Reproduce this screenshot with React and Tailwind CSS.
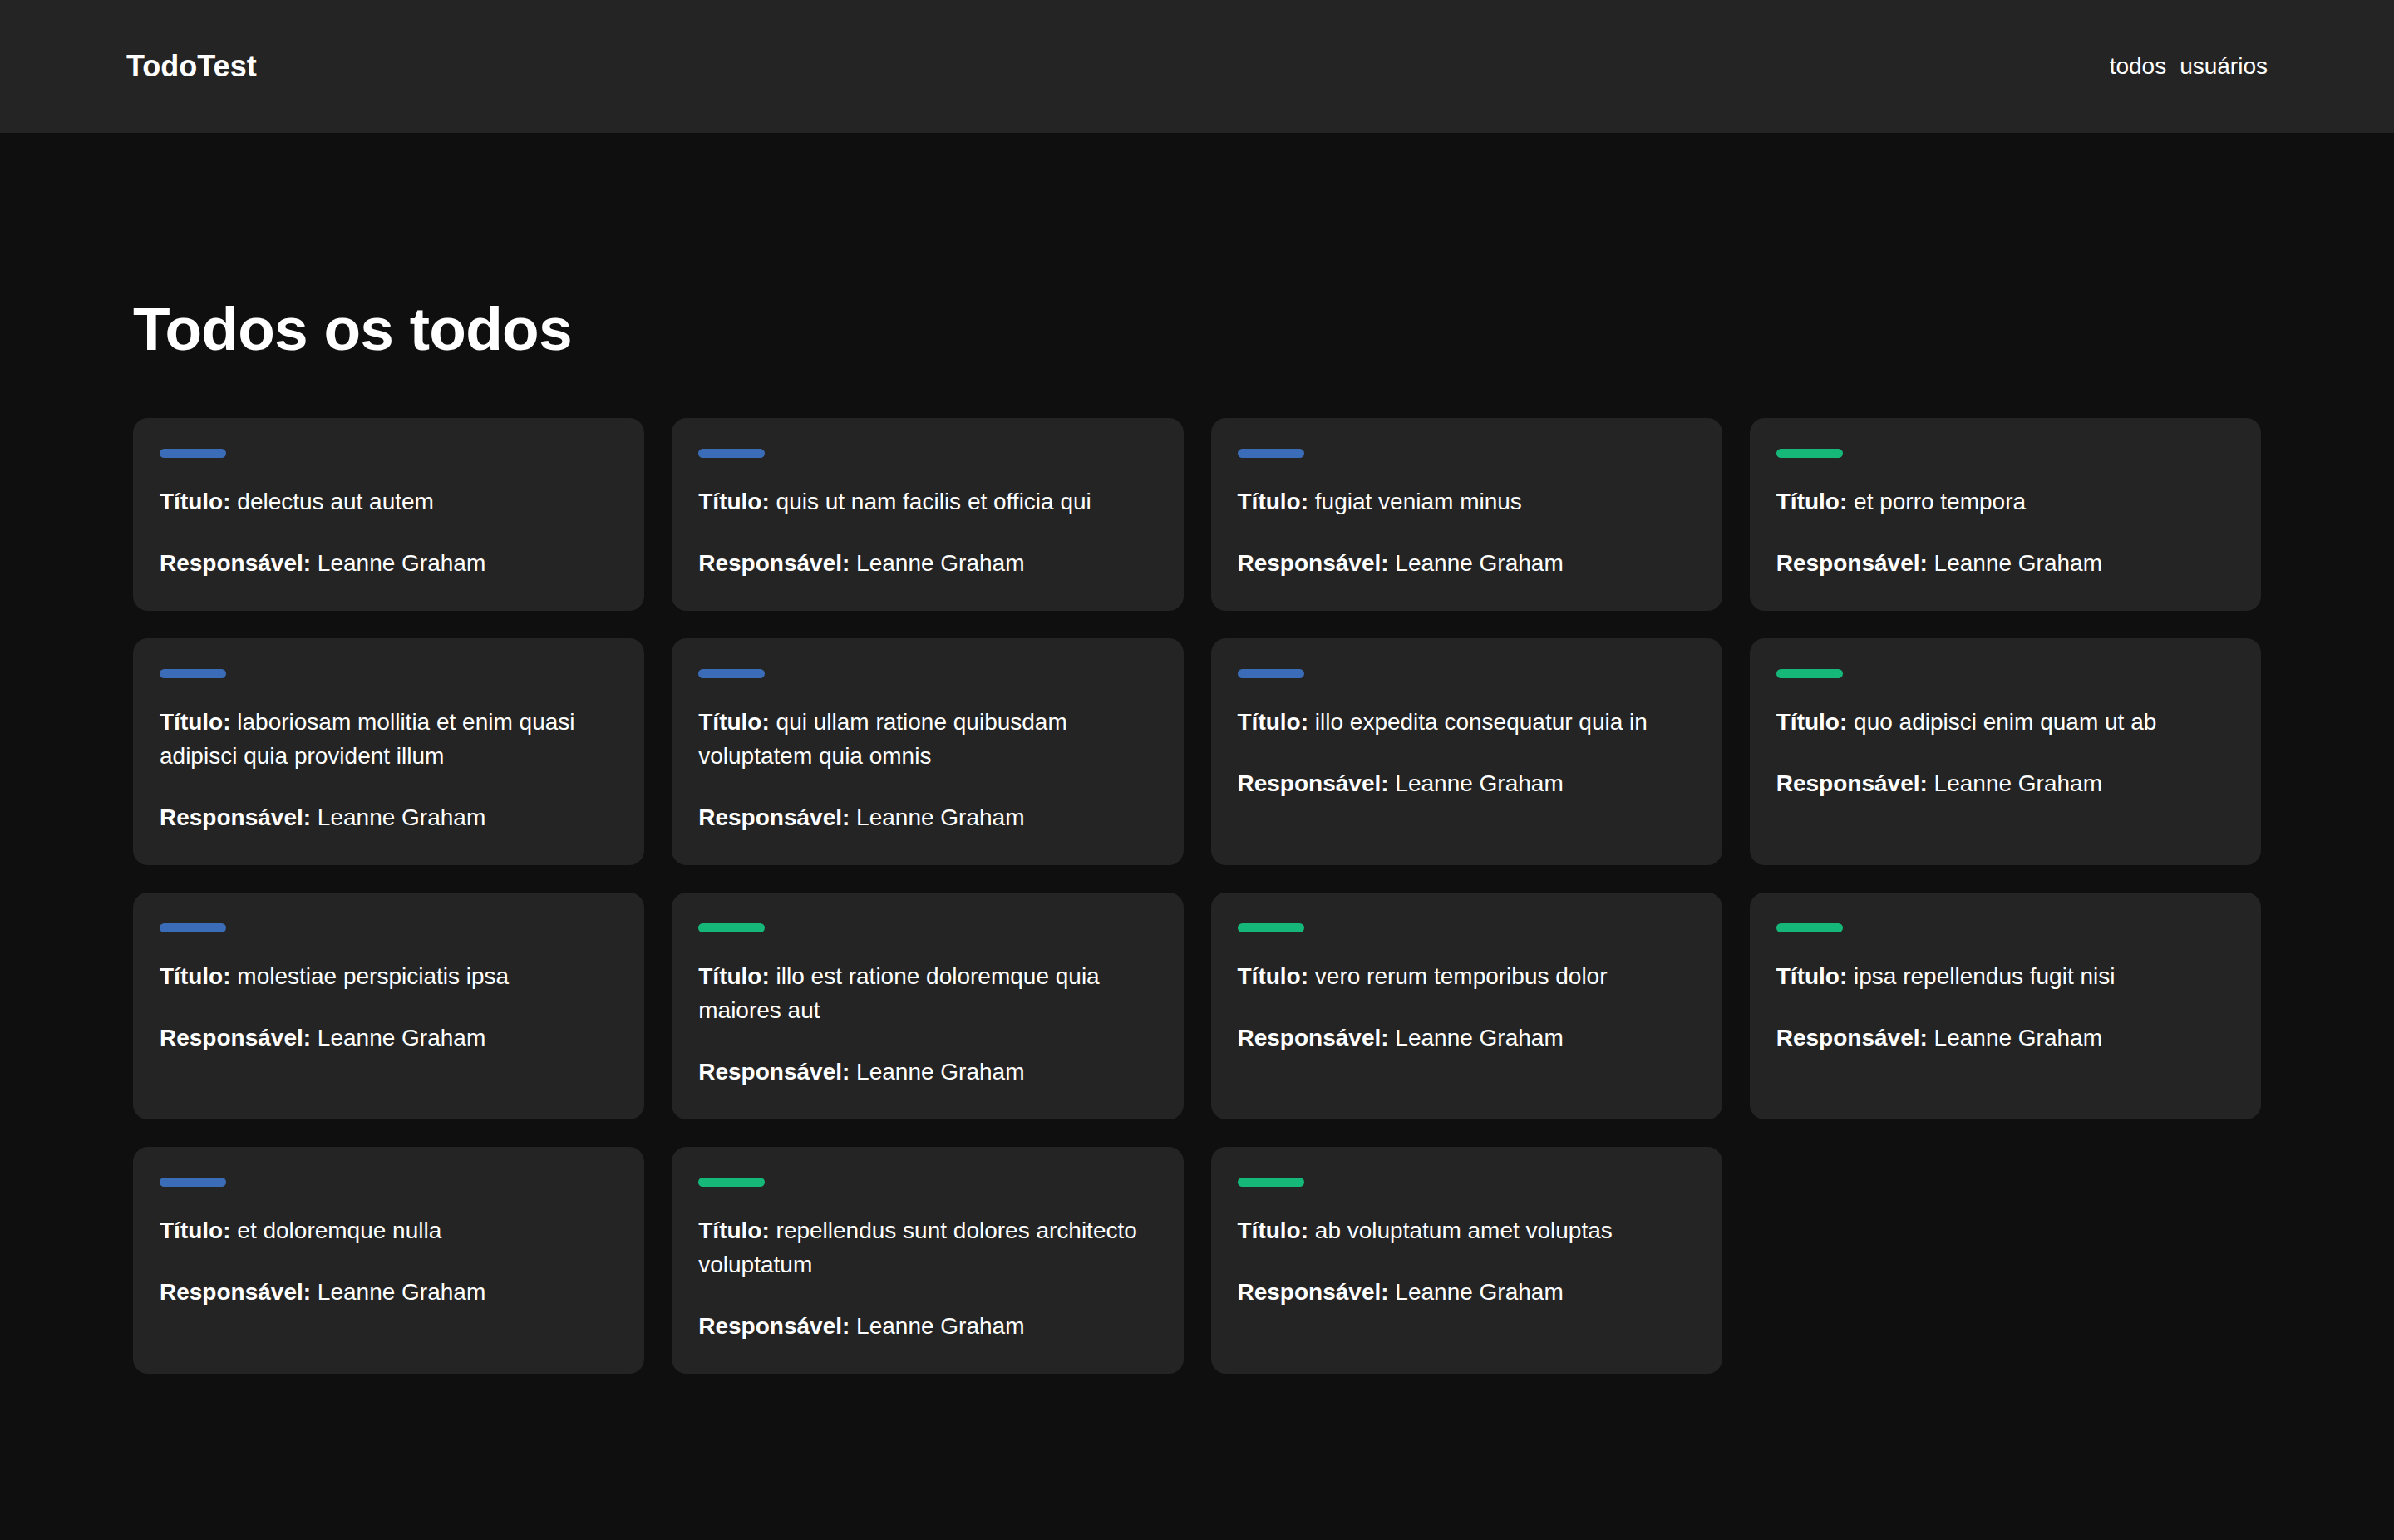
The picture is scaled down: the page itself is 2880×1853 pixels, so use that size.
const todos = [
  { title: "delectus aut autem", done: false },
  { title: "quis ut nam facilis et officia qui", done: false },
  { title: "fugiat veniam minus", done: false },
  { title: "et porro tempora", done: true },
  { title: "laboriosam mollitia et enim quasi adipisci quia provident illum", done: false },
  { title: "qui ullam ratione quibusdam voluptatem quia omnis", done: false },
  { title: "illo expedita consequatur quia in", done: false },
  { title: "quo adipisci enim quam ut ab", done: true },
  { title: "molestiae perspiciatis ipsa", done: false },
  { title: "illo est ratione doloremque quia maiores aut", done: true },
  { title: "vero rerum temporibus dolor", done: true },
  { title: "ipsa repellendus fugit nisi", done: true },
  { title: "et doloremque nulla", done: false },
  { title: "repellendus sunt dolores architecto voluptatum", done: true },
  { title: "ab voluptatum amet voluptas", done: true },
];

const Header = () => (
  <header className="h-[160px] bg-[#242424] flex items-center justify-between px-[152px]">
    <span className="text-[36px] font-bold text-white">TodoTest</span>
    <nav className="flex items-center gap-[16px] text-[28px] text-white">
      <a href="#">todos</a>
      <a href="#">usuários</a>
    </nav>
  </header>
);

const TodoCard = ({ title, done }) => (
  <div className="bg-[#242424] rounded-[18px] px-[32px] pt-[37px] pb-[37px] flex flex-col">
    <div className={`w-[80px] h-[11px] rounded-full ${done ? "bg-[#16b87a]" : "bg-[#3b6cb8]"}`} />
    <p className="mt-[32px] text-[28px] leading-[41px] text-white">
      <span className="font-bold">Título:</span> {title}
    </p>
    <p className="mt-[33px] text-[28px] leading-[41px] text-white">
      <span className="font-bold">Responsável:</span> Leanne Graham
    </p>
  </div>
);

export default function App() {
  return (
    <div className="min-h-screen bg-[#0f0f0f] font-['Liberation_Sans',Arial,sans-serif]">
      <Header />
      <main className="px-[160px] pt-[192px] pb-[200px]">
        <h1 className="text-[73px] leading-[88px] font-bold text-white tracking-[-0.01em] mb-[63px]">
          Todos os todos
        </h1>
        <div className="grid grid-cols-4 gap-[33px]">
          {todos.map((t, i) => (
            <TodoCard key={i} {...t} />
          ))}
        </div>
      </main>
    </div>
  );
}
